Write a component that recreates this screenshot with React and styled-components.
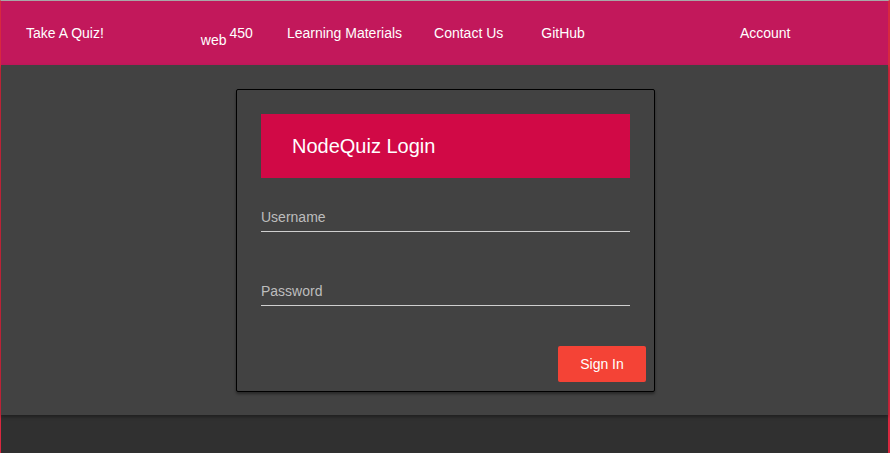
import React from "react";
import styled, { createGlobalStyle } from "styled-components";

const GlobalStyle = createGlobalStyle`
  html, body {
    margin: 0;
    padding: 0;
    height: 100%;
  }
  body {
    background-color: #303030;
    font-family: "Liberation Sans", Arial, sans-serif;
    font-size: 14px;
  }
`;

const Frame = styled.div`
  box-sizing: border-box;
  min-height: 100vh;
  border-top: 1px solid #a8a8a8;
  border-left: 1px solid #d8283f;
  border-right: 2px solid #d8283f;
  background-color: #303030;
`;

const Toolbar = styled.header`
  display: flex;
  align-items: center;
  height: 64px;
  padding-left: 25px;
  background-color: #c2185b;
  color: #ffffff;
`;

const NavItem = styled.a`
  display: block;
  margin-left: ${(p) => p.$gap || 0}px;
  line-height: 20px;
  color: #ffffff;
  text-decoration: none;
  cursor: pointer;
  white-space: nowrap;
`;

const Brand = styled.a`
  display: flex;
  align-items: flex-start;
  align-self: flex-start;
  margin-top: 22px;
  margin-left: ${(p) => p.$gap || 0}px;
  line-height: 20px;
  color: #ffffff;
  cursor: pointer;
`;

const BrandWord = styled.span`
  margin-top: 7px;
  margin-right: 3px;
`;

const BrandNumber = styled.span``;

const Main = styled.main`
  display: flex;
  justify-content: center;
  padding: 24px 0 23px 2px;
  background-color: #424242;
  box-shadow: 0 2px 3px rgba(0, 0, 0, 0.35);
`;

const Card = styled.form`
  box-sizing: border-box;
  width: 419px;
  display: flex;
  flex-direction: column;
  padding: 24px 24px 9px;
  border: 1px solid #000000;
  border-radius: 2px;
  background-color: #424242;
  box-shadow: 0 2px 3px rgba(0, 0, 0, 0.4);
`;

const CardTitle = styled.div`
  display: flex;
  align-items: center;
  height: 64px;
  padding-left: 31px;
  background-color: #d10946;
  color: #ffffff;
  font-size: 20px;
`;

const Field = styled.input`
  display: block;
  box-sizing: content-box;
  width: 100%;
  margin: ${(p) => p.$top}px 0 0;
  padding: 0 0 4px;
  height: 20px;
  border: none;
  border-bottom: 1px solid #cfcfcf;
  outline: none;
  background: transparent;
  color: #ffffff;
  font-family: "Liberation Sans", Arial, sans-serif;
  font-size: 14px;
  line-height: 20px;

  &::placeholder {
    color: #bdbdbd;
    opacity: 1;
  }
`;

const Actions = styled.div`
  display: flex;
  justify-content: flex-end;
  margin: 40px -16px 0 0;
`;

const SignInButton = styled.button`
  width: 88px;
  height: 36px;
  border: none;
  border-radius: 2px;
  background-color: #f44336;
  color: #ffffff;
  font-family: "Liberation Sans", Arial, sans-serif;
  font-size: 14px;
  cursor: pointer;
`;

export default function App() {
  return (
    <>
      <GlobalStyle />
      <Frame>
        <Toolbar>
          <NavItem>Take A Quiz!</NavItem>
          <Brand $gap={97}>
            <BrandWord>web</BrandWord>
            <BrandNumber>450</BrandNumber>
          </Brand>
          <NavItem $gap={34}>Learning Materials</NavItem>
          <NavItem $gap={32}>Contact Us</NavItem>
          <NavItem $gap={38}>GitHub</NavItem>
          <NavItem $gap={155}>Account</NavItem>
        </Toolbar>
        <Main>
          <Card onSubmit={(e) => e.preventDefault()}>
            <CardTitle>NodeQuiz Login</CardTitle>
            <Field $top={29} type="text" placeholder="Username" />
            <Field $top={49} type="password" placeholder="Password" />
            <Actions>
              <SignInButton type="submit">Sign In</SignInButton>
            </Actions>
          </Card>
        </Main>
      </Frame>
    </>
  );
}
